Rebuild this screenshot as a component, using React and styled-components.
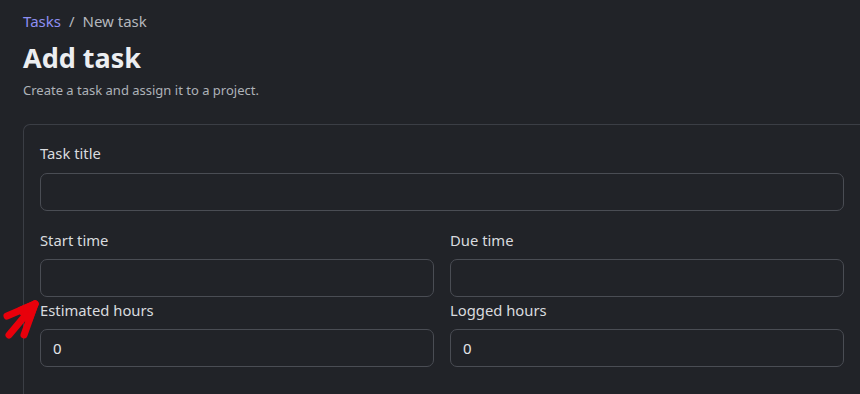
import styled, { createGlobalStyle } from 'styled-components';

const GlobalStyle = createGlobalStyle`
  html, body {
    margin: 0;
    padding: 0;
    background: #212328;
    overflow: hidden;
  }
  body {
    font-family: "Noto Sans", "Open Sans", sans-serif;
    color: #d6d8dc;
  }
`;

const Page = styled.div`
  position: relative;
  height: 394px;
  padding: 11px 0 0 23px;
  box-sizing: border-box;
  overflow: hidden;
`;

const Breadcrumb = styled.nav`
  display: flex;
  align-items: center;
  gap: 8px;
  font-size: 15px;
  line-height: 20px;
  color: #b4b7bd;
`;

const Crumb = styled.a`
  color: #8e8ff2;
  text-decoration: none;
`;

const Title = styled.h1`
  margin: 10px 0 0;
  font-size: 27px;
  line-height: 34px;
  font-weight: 700;
  color: #eceef1;
`;

const Subtitle = styled.p`
  margin: 6px 0 0;
  font-size: 13px;
  line-height: 18px;
  color: #aeb2b8;
`;

const Card = styled.section`
  margin-top: 25px;
  width: 860px;
  border: 1px solid #3b3e45;
  border-right: none;
  border-bottom: none;
  border-radius: 7px 0 0 0;
  padding: 18px 16px 0 16px;
  box-sizing: border-box;
  height: 300px;
`;

const Field = styled.div`
  display: flex;
  flex-direction: column;
  gap: ${(p) => p.$gap ?? 9}px;
  margin-bottom: ${(p) => p.$after ?? 0}px;
`;

const Row = styled.div`
  display: grid;
  grid-template-columns: 394px 394px;
  gap: 16px;
  margin-bottom: ${(p) => p.$after}px;
`;

const Label = styled.label`
  font-size: 14.8px;
  line-height: 20px;
  color: #d9dbdf;
`;

const Input = styled.div`
  height: 38px;
  box-sizing: border-box;
  border: 1px solid #4a4d54;
  border-radius: 7px;
  background: #212328;
  padding: 0 12px;
  display: flex;
  align-items: center;
  font-size: 15px;
  color: #e3e5e8;
  width: ${(p) => (p.$wide ? '804px' : 'auto')};
`;

// hand-drawn annotation pointing at the cramped gap
const Arrow = styled.svg`
  position: absolute;
  left: 0;
  top: 298px;
  width: 42px;
  height: 46px;
`;

export default function App() {
  return (
    <>
      <GlobalStyle />
      <Page>
        <Breadcrumb>
          <Crumb href="#">Tasks</Crumb>
          <span>/</span>
          <span>New task</span>
        </Breadcrumb>
        <Title>Add task</Title>
        <Subtitle>Create a task and assign it to a project.</Subtitle>

        <Card>
          <Field $gap={10} $after={19}>
            <Label>Task title</Label>
            <Input $wide />
          </Field>
          <Row $after={3}>
            <Field>
              <Label>Start time</Label>
              <Input />
            </Field>
            <Field>
              <Label>Due time</Label>
              <Input />
            </Field>
          </Row>
          <Row $after={0}>
            <Field>
              <Label>Estimated hours</Label>
              <Input>0</Input>
            </Field>
            <Field>
              <Label>Logged hours</Label>
              <Input>0</Input>
            </Field>
          </Row>
        </Card>

        <Arrow viewBox="0 0 42 46">
          <g stroke="#e8000b" strokeWidth="7" strokeLinecap="round" strokeLinejoin="round" fill="#e8000b">
            <path d="M35 6 L7 18" />
            <path d="M35 6 L9 37" />
            <path d="M35 6 L24 37" />
            <path d="M35 6 L21 12 L29 22 Z" />
          </g>
        </Arrow>
      </Page>
    </>
  );
}
